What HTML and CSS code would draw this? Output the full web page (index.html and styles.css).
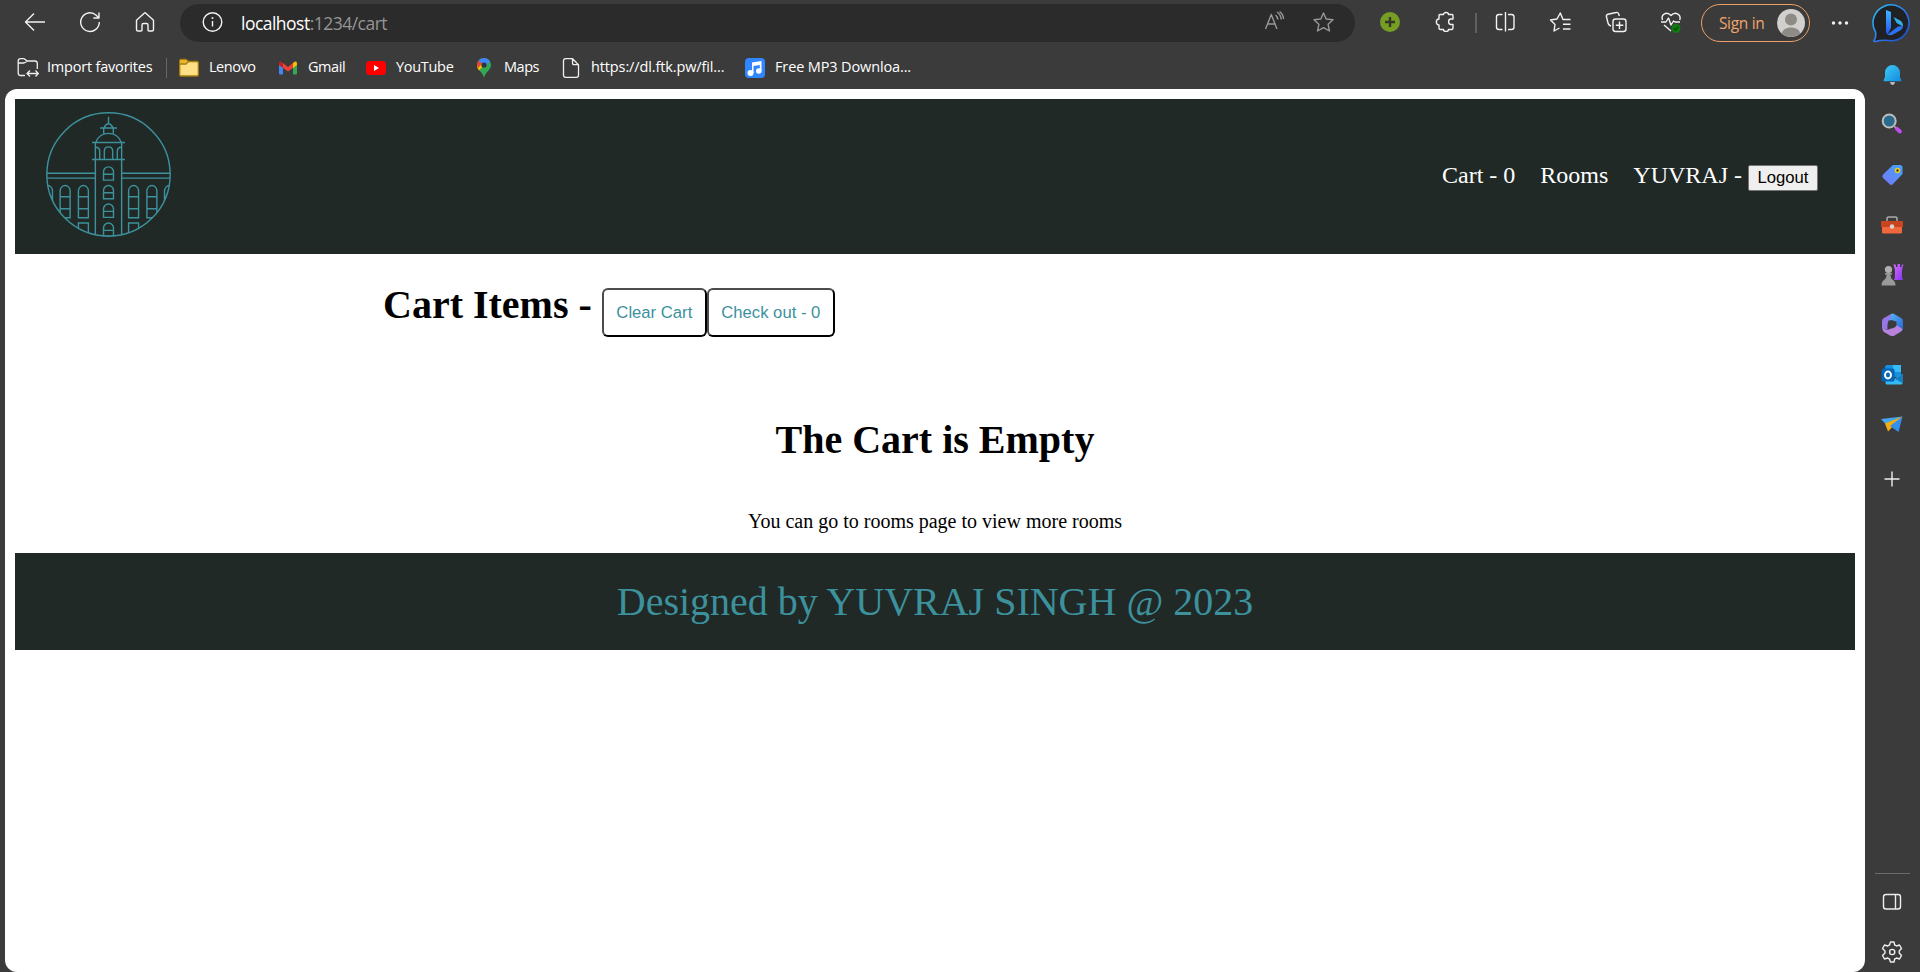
FILE: index.html
```html
<!DOCTYPE html>
<html lang="en">
<head>
<meta charset="utf-8">
<title>Cart</title>
<link rel="stylesheet" href="styles.css">
</head>
<body>
<div class="browser">
  <div class="main">
    <div class="toolbar">
      <div class="nav-buttons">
        <svg class="icon" viewBox="0 0 24 24"><path d="M22 11H3M11 2.500L2.500 11L11 19.500"/></svg>
        <svg class="icon" viewBox="0 0 24 24"><path d="M21.300 11A9.300 9.300 0 1 1 18.200 4.200L21 7M21 1.500V7H15.300"/></svg>
        <svg class="icon" viewBox="0 0 24 24"><path d="M3.500 9.200L11.200 2.200Q12 1.500 12.800 2.200L20.500 9.200V18.500Q20.500 20 19 20H16Q15 20 15 19V14Q15 12.500 13.500 12.500H10.500Q9 12.500 9 14V19Q9 20 8 20H5Q3.500 20 3.500 18.500Z"/></svg>
      </div>
      <div class="address">
        <svg class="icon" viewBox="0 0 24 24"><circle cx="12.500" cy="11" r="9.300"/><path d="M12.500 10V15.500"/><circle class="solid" cx="12.500" cy="7" r="1"/></svg>
        <span class="url"><b>localhost</b>:1234/cart</span>
        <svg class="icon dim read" viewBox="0 0 24 24"><path d="M3.500 18L9.300 3.500L15 18M5.600 13H13M13.500 4Q15.500 5.500 15.800 8.500M15 1Q18.700 3.300 19.300 8.500M17.500 .5Q21.500 3.500 21.500 8"/></svg>
        <svg class="icon dim" viewBox="0 0 24 24"><path d="M12.500 2L15.200 8L22 8.700L17.100 13.300L18.500 20L12.500 16.700L6.500 20L7.900 13.300L3 8.700L9.800 8Z"/></svg>
      </div>
      <div class="extensions">
        <svg class="icon" viewBox="0 0 24 24"><circle cx="12" cy="11" r="10" fill="#779d22" stroke="none"/><path d="M12 6V16M7 11H17" stroke="#34382b" stroke-width="2.400"/></svg>
        <svg class="icon" viewBox="0 0 24 24"><path d="M5 7V4.500Q5 3.500 6 3.500H9.500C9.500 .8 14.500 .8 14.500 3.500H18Q19 3.500 19 4.500V8H17C13.800 8 13.800 13.500 17 13.500H19V17Q19 18.500 17.500 18.500H14.500C14.500 21 9.500 21 9.500 18.500H6.500Q5 18.500 5 17V14C1.500 14 1.500 8 5 8Z"/></svg>
      </div>
      <span class="divider"></span>
      <div class="tools">
        <svg class="icon" viewBox="0 0 24 24"><path d="M9.500 3.500H6Q3.500 3.500 3.500 6V16Q3.500 18.500 6 18.500H9.500M15 3.500H18.500Q21 3.500 21 6V16Q21 18.500 18.500 18.500H15M12.500 1V20.500"/></svg>
        <svg class="icon" viewBox="0 0 24 24"><path d="M22.500 8.500H15L12.300 2L9 8L2.500 9L7 13.500L6 20L11.500 17M15 13.300H22.500M15 18H22.500"/></svg>
        <svg class="icon" viewBox="0 0 24 24"><rect x="9" y="8" width="13" height="12.500" rx="2.500"/><path d="M15.500 10.500V18M11.800 14.200H19.300M7 15L6 14.500Q4.500 14 4 12L2.500 6Q2 3.800 4 3.200L12 1.500Q14 1 14.700 3L15.300 5"/></svg>
        <svg class="icon" viewBox="0 0 24 24"><path d="M3.500 9C1.500 3 8 0 12 4.500C16 0 22.500 3 20.800 9M2 11H7L9.500 7L12 14L14.500 10L16 11H21M5 14L12 20"/><circle cx="17" cy="17.500" r="4.500" fill="#107c10" stroke="none"/><path d="M14.800 17.500L16.500 19L19.300 15.800" stroke="#064c06"/></svg>
      </div>
      <div class="signin">
        <span>Sign in</span>
        <svg viewBox="0 0 28 28"><circle cx="14" cy="14" r="14" fill="#d2d0ce"/><circle cx="14" cy="10.500" r="6" fill="#8e8a86"/><path d="M5 24.800C5 16.500 23 16.500 23 24.800Q14 31 5 24.800Z" fill="#8e8a86"/></svg>
      </div>
      <svg class="icon more" viewBox="0 0 24 24"><g class="solid"><circle cx="5.500" cy="12" r="1.700"/><circle cx="12" cy="12" r="1.700"/><circle cx="18.500" cy="12" r="1.700"/></g></svg>
    </div>

    <div class="favorites">
      <div class="fav first">
        <svg viewBox="0 0 20 20"><path d="M7 17.500H2.500Q.2 17.500 .2 15V3Q.2 .7 2.500 .7H6L9.300 3H17Q19.300 3 19.300 5.500V11M.2 5H5.500Q7 5 9.300 3M9.500 15.500H20M12 12.500L9 15.500L12 18.500M17.500 12.500L20.300 15.500L17.500 18.500"/></svg><span class="t-import">Import favorites</span>
      </div>
      <div class="fav">
        <svg viewBox="0 0 20 20"><path d="M.7 3Q.7 1.500 2 1.500H7L9.500 3.500H18Q19.300 3.500 19.300 5V17Q19.300 18 18 18H2Q.7 18 .7 17Z" fill="#ffe085" stroke="#a77b0c"/><path d="M1.200 2H7L8.500 3.700L7 5.500H1.200Z" fill="#e8b52b" stroke="none"/><path d="M1 6H7L9.500 3.500" stroke="#a77b0c"/></svg><span>Lenovo</span>
      </div>
      <div class="fav">
        <svg viewBox="0 0 20 20"><g stroke="none"><path fill="#4285f4" d="M1 6L5 9V16.500H2Q1 16.500 1 15.500Z"/><path fill="#34a853" d="M15 9L19 6V15.500Q19 16.500 18 16.500H15Z"/><path fill="#fbbc04" d="M15 5L17 3.600Q19 3 19 5.500V7L15 10Z"/><path fill="#ea4335" d="M5 5L10 9L15 5V10L10 13.500L5 10Z"/><path fill="#c5221f" d="M1 5.500Q1 3 3 3.600L5 5V10L1 7Z"/></g></svg><span>Gmail</span>
      </div>
      <div class="fav">
        <svg viewBox="0 0 20 20"><g stroke="none"><rect y="3" width="20" height="14" rx="4" fill="#f00"/><path fill="#fff" d="M8 7V13L13 10Z"/></g></svg><span class="t-youtube">YouTube</span>
      </div>
      <div class="fav">
        <svg viewBox="0 0 20 20"><g stroke="none"><path d="M10 20C9 14 3 12 3 7A7 7 0 0 1 17 7C17 12 11 14 10 20Z" fill="#34a853"/><path d="M3 7Q3 10 5 12.500L13 4A4 4 0 0 0 7 4.500Z" fill="#fbbc04"/><path d="M4.600 2.500L8 5.500L4 10Q2 6 4.600 2.500Z" fill="#ea4335"/><path d="M4.600 2.500C8-1.300 14-.5 16 3.500L12 8L7 4.700Z" fill="#4285f4"/><circle cx="10" cy="7" r="2.600" fill="#2d3345"/></g></svg><span>Maps</span>
      </div>
      <div class="fav">
        <svg viewBox="0 0 20 20"><path d="M4.500 .7H11.500L17.500 6.700V17Q17.500 19.300 15.500 19.300H4.500Q2.500 19.300 2.500 17V3Q2.500 .7 4.500 .7ZM11.500 .7V5Q11.500 6.700 13 6.700H17.500"/></svg><span class="t-link">https://dl.ftk.pw/fil...</span>
      </div>
      <div class="fav">
        <svg viewBox="0 0 20 20"><g stroke="none"><rect width="20" height="20" rx="4" fill="#2f86ff"/><path fill="#fff" d="M7 4.500L16.500 3V13H14.800V7L8.500 8V15H7Z"/><circle cx="5.500" cy="15" r="3" fill="#fff"/><circle cx="13.800" cy="13" r="2.800" fill="#fff"/></g></svg><span class="t-music">Free MP3 Downloa...</span>
      </div>
    </div>

    <div class="page">
      <header class="site-header">
        <svg class="logo" viewBox="138 80 375 376">
          <defs><clipPath id="round"><circle cx="325.500" cy="268" r="186"/></clipPath>
            <g id="window"><path d="M-15 40V15A15 15 0 0 1 15 15V40ZM-15 22H15"/></g>
            <g id="tall"><path d="M-15 97V17A15 17 0 0 1 15 17V97ZM-15 34H15M-15 70H15"/></g>
          </defs>
          <circle cx="325.500" cy="268" r="185.500"/>
          <g clip-path="url(#round)">
            <path d="M138 264H286M138 279H286M366 264H513M366 279H513" />
            <path d="M286 456V172M365 456V172M276 172H375M276 223H375M287 172C300 135 351 135 364 172M311 145V128M340 145V128M300 128H351M312 127Q325 104 339 127M325.500 94V115"/>
            <path d="M313 222V198Q313 185 325.500 185Q338 185 338 198V222M287 186Q299 186 299 199V222M364 186Q352 186 352 199V222"/>
            <use href="#window" x="325.500" y="245"/><use href="#window" x="325.500" y="301"/><use href="#window" x="325.500" y="357"/><use href="#window" x="325.500" y="414"/>
            <use href="#tall" x="142" y="301"/><use href="#tall" x="195" y="301"/><use href="#tall" x="250" y="301"/><use href="#tall" x="401" y="301"/><use href="#tall" x="456" y="301"/><use href="#tall" x="509" y="301"/>
            <path d="M235 456V414H265V456M386 456V414H416V456"/>
          </g>
        </svg>
        <nav class="links"><span>Cart - 0</span><span>Rooms</span><span>YUVRAJ - <button class="logout">Logout</button></span></nav>
      </header>
      <main class="cart">
        <h1 class="cart-title">Cart Items - <span class="actions"><button class="action clear">Clear Cart</button><button class="action checkout">Check out - 0</button></span></h1>
        <h1 class="empty-title">The Cart is Empty</h1>
        <p class="empty-text">You can go to rooms page to view more rooms</p>
      </main>
      <footer class="site-footer">Designed by YUVRAJ SINGH @ 2023</footer>
    </div>
  </div>

  <aside class="sidebar">
    <svg class="bing" viewBox="0 0 40 40">
      <defs><linearGradient id="ring" x1="0" y1="0" x2="1" y2="1"><stop offset="0" stop-color="#25c5f2"/><stop offset=".5" stop-color="#2f7df0"/><stop offset="1" stop-color="#1748c8"/></linearGradient><linearGradient id="bb" x1="0" y1="0" x2="0" y2="1"><stop offset="0" stop-color="#3fb6ff"/><stop offset="1" stop-color="#2457ee"/></linearGradient><linearGradient id="bc" x1="0" y1="1" x2="1" y2="0"><stop offset="0" stop-color="#2380e8"/><stop offset="1" stop-color="#3bdce4"/></linearGradient></defs>
      <path d="M2 37.500Q4.500 34 3.500 29A18 18 0 1 1 20.500 37.800Q10 36.500 3.500 38.500Q1.500 38.800 2 37.500Z" fill="#202124" stroke="url(#ring)" stroke-width="1.600"/>
      <path d="M14 7L19 9V25L15.500 31.500Q14 30.500 14 28Z" fill="url(#bb)"/><path d="M21.500 14L28 17.500Q31 19 31 23.500L24.500 20Z" fill="url(#bc)"/><path d="M15.500 31.500L26 23.500L31 23Q31 25.500 29 27L21 31.500Q18 33 15.500 31.500Z" fill="#2d72f5"/>
    </svg>
    <div class="apps">
      <svg viewBox="0 0 24 24"><defs><linearGradient id="bell" x1="0" y1="0" x2="1" y2="1"><stop offset="0" stop-color="#40ccf5"/><stop offset="1" stop-color="#128ade"/></linearGradient></defs><path d="M10 19H15Q14.500 22 12.500 22T10 19Z" fill="#b8b8b8"/><path d="M5 9.500A7.500 7.500 0 0 1 20 9.500V14L21.300 17V18.300H3.700V17L5 14Z" fill="url(#bell)"/></svg>
      <svg viewBox="0 0 24 24"><circle cx="9.200" cy="8" r="6.500" fill="#286b8c" stroke="#bdbdbd" stroke-width="2"/><path d="M13.800 12.800L16.500 15.500" stroke="#999" stroke-width="2"/><path d="M17 15.800L20 18.500" stroke="#c44bf2" stroke-width="3.800" stroke-linecap="round"/></svg>
      <svg viewBox="0 0 24 24"><defs><linearGradient id="tag" x1="1" y1="0" x2="0" y2="1"><stop offset="0" stop-color="#40a2fa"/><stop offset="1" stop-color="#7878f6"/></linearGradient></defs><path d="M13 2H20Q22.500 2 22.500 4.500V11L13 21Q11.500 23 9.500 21L3 15Q1.500 13 3 11.500Z" fill="url(#tag)"/><circle cx="17.500" cy="7.500" r="2" fill="#333" stroke="#f0cd1e" stroke-width="1.600"/></svg>
      <svg viewBox="0 0 24 24"><path d="M7 8V5.500Q7 4 9 4H15Q17 4 17 5.500V8" fill="none" stroke="#aaa" stroke-width="1.500"/><path d="M2 8H22.500Q23 8 23 9V14H1V9Q1 8 2 8Z" fill="#c8441f"/><path d="M2 14H22V19.500Q22 20.500 21 20.500H3Q2 20.500 2 19.500Z" fill="#ef683b"/><circle cx="12" cy="13.500" r="2.200" fill="#d7d4d2"/></svg>
      <svg viewBox="0 0 24 24"><defs><linearGradient id="rook" x1="0" y1="0" x2="1" y2="1"><stop stop-color="#d76bfa"/><stop offset="1" stop-color="#8434f4"/></linearGradient></defs><path d="M13.500 1L16 2V4H17.500V1H20V4H21.500V2L23.500 1L22 7V14L23 17H14L15 14V7Z" fill="url(#rook)"/><circle cx="8.500" cy="6.500" r="3.600" fill="#b0b0b0"/><path d="M5 10H12V11.500H10.500Q10.500 15.500 13 17Q15.500 18.500 15.500 22.500H1.500Q1.500 18.500 4 17Q6.500 15.500 6.500 11.500H5Z" fill="#999"/></svg>
      <svg viewBox="0 0 24 24"><defs><linearGradient id="m1" x1="0" y1="0" x2="1" y2="1"><stop stop-color="#55bdf6"/><stop offset="1" stop-color="#285dd2"/></linearGradient></defs><path d="M11 1Q13 0 15 1.500L21 5Q23 6 23 8V15Q23 18 20 19L15 16L16.500 14V8.500L8 7Z" fill="url(#m1)"/><path d="M11 1Q12.500 3 9.500 6.500Q7 9 7.500 16L3.500 17.500Q2 16.500 2 14V8Q2 6 4 5Z" fill="#9777e5"/><path d="M2.500 16Q8 18 12 15L17 12.500L22.500 16Q22 18.500 19.500 19.500L14.500 22.500Q12.500 23.500 10 22.500L4 19Q2.500 18 2.500 16Z" fill="#b982dd"/><path d="M9 8.500L12 7L15.500 9V14L12 15.500L9 14Z" fill="#3b3b3b"/></svg>
      <svg viewBox="0 0 24 24"><path d="M7 2H19Q21 2 21 4V14H5V4Q5 2 7 2Z" fill="#1490df"/><path d="M13 2H21V9H13Z" fill="#36baf4"/><path d="M6 12L14 16L22.500 11V20Q22.500 21.500 21 21.500H7Q5.500 21.500 5.500 20Z" fill="#36baf4"/><path d="M15 16L22.500 11V20Z" fill="#147dc4"/><rect x="1.500" y="5.500" width="13" height="13" rx="1.500" fill="#0564b8"/><ellipse cx="8" cy="12" rx="3" ry="3.400" fill="none" stroke="#fff" stroke-width="2"/></svg>
      <svg viewBox="0 0 24 24"><path d="M1 6L22.500 3.500L5.500 11Z" fill="#43a8ee"/><path d="M5 10.500L22.500 3.500L8 18.500Z" fill="#f5ae12"/><path d="M10 13L22.500 3.500L18.500 19Z" fill="#3490ef"/></svg>
    </div>
    <svg class="line-icon add" viewBox="0 0 24 24"><path d="M12 4.500V19.500M4.500 12H19.500"/></svg>
    <div class="bottom-tools">
      <svg class="line-icon" viewBox="0 0 24 24"><rect x="3.500" y="4.500" width="17" height="14.500" rx="2.500"/><path d="M15.500 4.500V19"/></svg>
      <svg class="line-icon" viewBox="0 0 24 24"><path d="M10.500 2H14L14.700 5Q15.500 5.300 16.500 6L19.500 5L21.500 8.500L19.200 11Q19.300 12 19.200 13L21.500 15.500L19.500 19L16.500 18Q15.500 18.700 14.700 19L14 22H10.500L9.500 19Q8.500 18.700 7.700 18L4.500 19L2.500 15.500L5 13V11L2.500 8.500L4.500 5L7.700 6Q8.500 5.300 9.500 5Z"/><circle cx="12.200" cy="12" r="2.600"/></svg>
    </div>
  </aside>
</div>
</body>
</html>
```

FILE: styles.css
```css
* { box-sizing: border-box; }
body { margin: 0; background: #3b3b3b; font-family: "Liberation Serif", serif; }
svg { display: block; flex: none; }
button { font-family: "Liberation Sans", sans-serif; }

.browser { display: flex; width: 1920px; height: 972px; overflow: hidden; }
.main { width: 1865px; display: flex; flex-direction: column; }

/* toolbar */
.toolbar { height: 46px; padding-left: 23px; display: flex; align-items: center; font-family: "Open Sans", sans-serif; }
.icon { width: 24px; height: 24px; fill: none; stroke: #f2f2f2; stroke-width: 1.4; stroke-linejoin: round; }
.solid { fill: #f2f2f2; stroke: none; }
.dim { stroke: #989898; }
.nav-buttons { display: flex; gap: 31px; }
.address { width: 1175px; height: 38px; margin-left: 23px; padding: 0 20px; border-radius: 19px; background: #2b2b2b; display: flex; align-items: center; }
.url { margin-left: 17px; color: #959595; font-size: 17.500px; letter-spacing: -0.520px; line-height: 24px; }
.url b { font-weight: 400; color: #fff; }
.read { margin-left: auto; margin-right: 25px; }
.extensions { display: flex; gap: 32px; margin-left: 23px; }
.divider { width: 2px; height: 20px; margin: 0 16px 0 17px; background: #606060; }
.tools { display: flex; gap: 31.300px; }
.signin { width: 109px; height: 38px; margin-left: 18px; padding: 0 4px 0 17px; border: 1.500px solid #eda066; border-radius: 19px; display: flex; align-items: center; justify-content: space-between; color: #f0a56c; font-size: 15.500px; letter-spacing: -0.3px; white-space: nowrap; }
.signin span { margin-top: -1px; }
.signin svg { width: 28px; height: 28px; }
.more { margin-left: 18px; }

/* favorites */
.favorites { height: 43px; padding-left: 18px; display: grid; grid-template-columns: 161px 99px 88px 108px 87px 184px 160px; font-family: "Open Sans", sans-serif; font-size: 14.500px; color: #fff; }
.fav { display: flex; align-items: center; gap: 10px; white-space: nowrap; letter-spacing: -0.45px; }
.fav span { margin-top: -2px; }
.fav .t-import { letter-spacing: -0.2px; margin-left: -1px; }
.fav .t-youtube { letter-spacing: -0.3px; }
.fav .t-link { letter-spacing: -0.12px; }
.fav .t-music { letter-spacing: -0.13px; }
.fav svg { width: 20px; height: 20px; overflow: visible; fill: none; stroke: #eee; stroke-width: 1.300; }
.first::after { content: ""; width: 1px; height: 20px; margin-left: auto; margin-right: 12px; background: #666; }

/* page */
.page { width: 1860px; height: 883px; margin-left: 5px; padding: 10px; border-radius: 12px; background: #fff; }
.site-header { height: 155px; padding: 0 37px 0 31px; background: #202926; display: flex; align-items: center; justify-content: space-between; }
.logo { width: 125px; height: 125px; margin-top: -5px; fill: none; stroke: #3c919d; stroke-width: 4.300; }
.links { display: flex; gap: 25px; align-items: baseline; color: #fff; font-size: 24px; }
.logout { width: 70px; height: 26px; padding: 0; border: 1px solid #767676; border-radius: 2px; background: #efefef; font-size: 16.667px; color: #000; }
.cart { height: 299px; }
.cart-title { width: 1104px; margin: 0 auto; padding-top: 28px; font-size: 40px; line-height: 46px; height: 142px; white-space: nowrap; }
.actions { display: inline-flex; }
.action { height: 49px; padding: 1px 0 0; border: 2px solid; border-color: #4c4c4c #000 #000 #4c4c4c; border-radius: 6px; background: #fff; color: #3c919d; font-size: 16.667px; }
.clear { width: 105px; }
.checkout { width: 128px; }
.empty-title { margin: 0; padding-top: 21px; height: 92px; text-align: center; font-size: 40px; line-height: 46px; }
.empty-text { margin: 0; padding-top: 22px; text-align: center; font-size: 20px; line-height: 23px; }
.site-footer { height: 97px; background: #202926; color: #3c919d; text-align: center; font-size: 40px; line-height: 97px; }

/* sidebar */
.sidebar { width: 55px; padding-right: 1px; display: flex; flex-direction: column; align-items: center; }
.bing { width: 40px; height: 40px; margin-top: 3px; }
.apps { margin-top: 20px; display: flex; flex-direction: column; gap: 26px; }
.apps svg { width: 24px; height: 24px; }
.line-icon { width: 24px; height: 24px; fill: none; stroke: #eee; stroke-width: 1.400; stroke-linejoin: round; }
.add { margin-top: 30px; }
.bottom-tools { margin-top: auto; width: 35px; height: 99px; border-top: 1px solid #6b6b6b; display: flex; flex-direction: column; align-items: center; gap: 26px; padding-top: 16px; }
```
